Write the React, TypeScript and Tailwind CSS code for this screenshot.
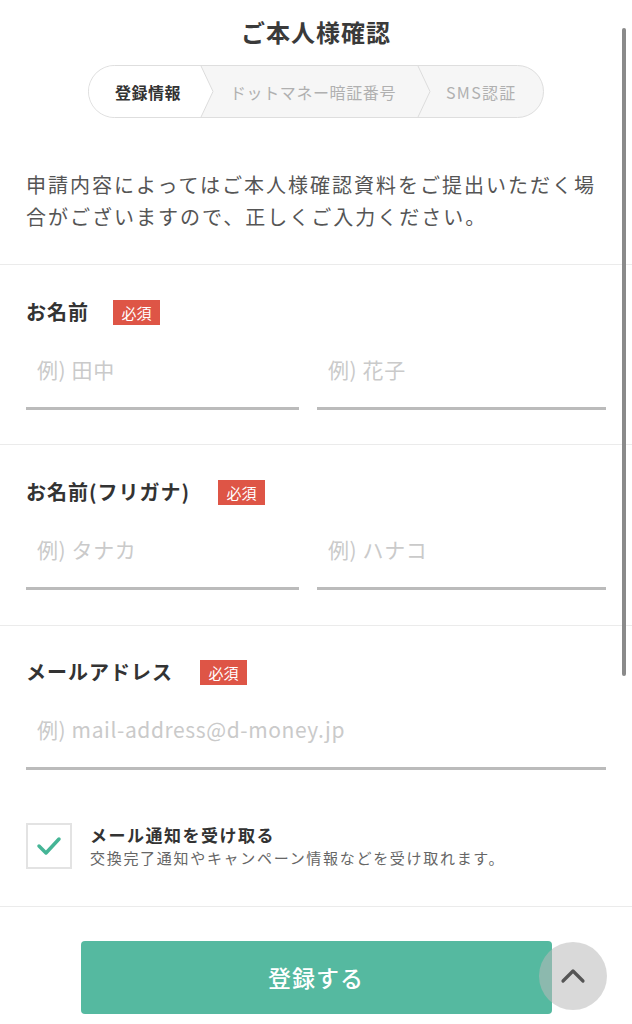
import React from "react";

const font = { fontFamily: '"Noto Sans CJK JP", "Noto Sans", sans-serif' };

function Badge() {
  return (
    <span className="inline-flex h-[25px] w-[47px] items-center justify-center bg-[#de5546] text-[15px] leading-none text-white">
      必須
    </span>
  );
}

function Label({ text, gap }: { text: string; gap: string }) {
  return (
    <div className={`flex h-[26px] items-center ${gap}`}>
      <span className="text-[20px] font-bold tracking-[1px] text-[#333]">{text}</span>
      <Badge />
    </div>
  );
}

function Field({ placeholder, className }: { placeholder: string; className?: string }) {
  return (
    <div className={`flex h-[64px] items-center border-b-[3px] border-[#bbbbbb] pb-[14px] pl-[11px] ${className ?? ""}`}>
      <span className="text-[21px] tracking-[0.6px] text-[#cacaca]">{placeholder}</span>
    </div>
  );
}

function Chevron({ fill }: { fill?: boolean }) {
  return (
    <svg className="absolute right-0 top-0 h-full w-[14px]" viewBox="0 0 14 51" preserveAspectRatio="none">
      {fill && <polygon points="0,0 1,0 13,25.5 1,51 0,51" fill="#ffffff" />}
      <polyline points="1,0 13,25.5 1,51" fill="none" stroke="#dcdcdc" strokeWidth="1" />
    </svg>
  );
}

export default function App() {
  return (
    <div className="relative min-h-[1024px] w-full overflow-hidden bg-white" style={font}>
      {/* header */}
      <div className="flex flex-col items-center pt-4">
        <h1 className="h-8 text-[24px] font-bold leading-8 tracking-[1px] text-[#3a3a3a]">ご本人様確認</h1>
        <div className="mt-[17px] flex h-[53px] w-[456px] overflow-hidden rounded-full border border-[#dedede] bg-[#f6f6f6]">
          <div className="relative flex w-[125px] shrink-0 items-center">
            <div className="absolute inset-y-0 left-0 right-[14px] bg-white" />
            <Chevron fill />
            <span className="relative w-[111px] pl-[26px] text-[16px] font-bold tracking-[0.5px] text-[#333]">登録情報</span>
          </div>
          <div className="relative -ml-[13px] flex w-[230px] shrink-0 items-center">
            <Chevron />
            <span className="w-[216px] whitespace-nowrap pl-[29px] text-[16px] tracking-[0.6px] text-[#b0b0b0]">ドットマネー暗証番号</span>
          </div>
          <div className="-ml-[13px] flex flex-1 items-center">
            <span className="pl-[28px] text-[16px] tracking-[1.3px] text-[#b0b0b0]">SMS認証</span>
          </div>
        </div>
      </div>

      {/* intro */}
      <div className="border-b border-[#ebebeb] px-[26px] pb-[31px] pt-[51px]">
        <p className="text-[20px] leading-[32px] tracking-[2px] text-[#555]">
          申請内容によってはご本人様確認資料をご提出いただく場合がございますので、正しくご入力ください。
        </p>
      </div>

      {/* name */}
      <div className="border-b border-[#ebebeb] px-[26px] pb-[34px] pt-[34px]">
        <Label text="お名前" gap="gap-[24px]" />
        <div className="mt-[21px] flex gap-[18px]">
          <Field placeholder="例) 田中" className="w-[273px] shrink-0" />
          <Field placeholder="例) 花子" className="flex-1" />
        </div>
      </div>

      {/* kana */}
      <div className="border-b border-[#ebebeb] px-[26px] pb-[35px] pt-[34px]">
        <Label text="お名前(フリガナ)" gap="gap-[28px]" />
        <div className="mt-[21px] flex gap-[18px]">
          <Field placeholder="例) タナカ" className="w-[273px] shrink-0" />
          <Field placeholder="例) ハナコ" className="flex-1" />
        </div>
      </div>

      {/* mail */}
      <div className="border-b border-[#ebebeb] px-[26px] pb-[37px] pt-[33px]">
        <Label text="メールアドレス" gap="gap-[27px]" />
        <div className="mt-[21px]">
          <Field placeholder="例) mail-address@d-money.jp" />
        </div>
        <div className="mt-[53px] flex items-center gap-[18px]">
          <div className="flex h-[46px] w-[46px] shrink-0 items-center justify-center border-2 border-[#e3e3e3]">
            <svg width="26" height="20" viewBox="0 0 26 20">
              <polyline points="3,10 10,17 23,3" fill="none" stroke="#45b596" strokeWidth="3.5" strokeLinecap="round" strokeLinejoin="round" />
            </svg>
          </div>
          <div className="flex flex-col">
            <span className="text-[17px] font-bold leading-[24px] tracking-[1.5px] text-[#333]">メール通知を受け取る</span>
            <span className="text-[15px] leading-[22px] tracking-[1.7px] text-[#666]">交換完了通知やキャンペーン情報などを受け取れます。</span>
          </div>
        </div>
      </div>

      {/* button */}
      <div className="flex justify-center pt-[34px]">
        <button className="flex h-[73px] w-[471px] items-center justify-center rounded-[4px] bg-[#55b9a0] text-[23px] font-medium tracking-[1px] text-white">
          登録する
        </button>
      </div>

      {/* scroll to top */}
      <div className="absolute left-[539px] top-[942px] flex h-[68px] w-[68px] items-center justify-center rounded-full bg-[rgba(185,185,185,0.55)]">
        <svg width="26" height="16" viewBox="0 0 26 16">
          <polyline points="3,13 13,3 23,13" fill="none" stroke="#555" strokeWidth="3.2" strokeLinecap="round" strokeLinejoin="round" />
        </svg>
      </div>

      {/* scroll indicator */}
      <div className="absolute left-[622px] top-[28px] h-[648px] w-[4px] rounded-full bg-[#8a8a8a]" />
    </div>
  );
}
